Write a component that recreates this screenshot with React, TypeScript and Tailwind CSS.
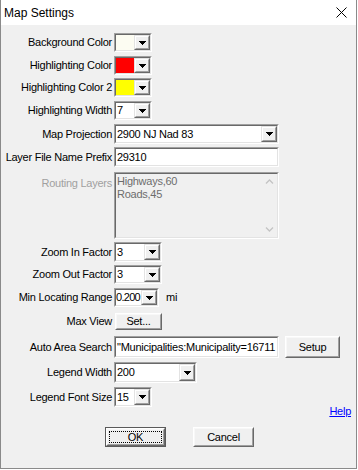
import React from "react";

const FONT = "font-['Liberation_Sans',Arial,sans-serif] text-[11px] tracking-[-0.25px]";

function Arrow() {
  return (
    <svg width="7" height="4" viewBox="0 0 7 4" shapeRendering="crispEdges">
      <path d="M0 0h7v1H0z M1 1h5v1H1z M2 2h3v1H2z M3 3h1v1H3z" fill="#000" />
    </svg>
  );
}

function Chevron({ up }: { up?: boolean }) {
  return (
    <svg width="9" height="5" viewBox="0 0 9 5">
      <path d={up ? "M1 4.5L4.5 1L8 4.5" : "M1 0.5L4.5 4L8 0.5"} fill="none" stroke="#c4c4c4" strokeWidth="1.3" />
    </svg>
  );
}

function Sunken({ className, inner, children }: { className: string; inner?: string; children?: React.ReactNode }) {
  return (
    <div className={"flex border border-t-[#a0a0a0] border-l-[#a0a0a0] border-b-white border-r-white " + className}>
      <div className={"flex flex-1 min-w-0 border border-t-[#696969] border-l-[#696969] border-b-[#e3e3e3] border-r-[#e3e3e3] " + (inner ?? "bg-white")}>
        {children}
      </div>
    </div>
  );
}

function DropBtn() {
  return (
    <div className="flex w-[16px] shrink-0 border border-t-[#e3e3e3] border-l-[#e3e3e3] border-b-[#696969] border-r-[#696969] bg-[#f0f0f0]">
      <div className="flex flex-1 items-center justify-center border border-t-white border-l-white border-b-[#a0a0a0] border-r-[#a0a0a0]">
        <Arrow />
      </div>
    </div>
  );
}

function Combo({
  className,
  value,
  swatch,
  valueClass,
}: {
  className: string;
  value?: string;
  swatch?: string;
  valueClass?: string;
}) {
  return (
    <Sunken className={className}>
      {swatch ? (
        <div className={"flex-1 " + swatch} />
      ) : (
        <div className={"flex flex-1 min-w-0 items-center overflow-hidden whitespace-nowrap text-black " + (valueClass ?? "pl-[1px]")}>
          {value}
        </div>
      )}
      <DropBtn />
    </Sunken>
  );
}

function Btn({ className, children }: { className: string; children: React.ReactNode }) {
  return (
    <div className={"flex border border-t-white border-l-white border-b-[#696969] border-r-[#696969] bg-[#f0f0f0] " + className}>
      <div className="flex flex-1 items-center justify-center border border-t-[#f8f8f8] border-l-[#f8f8f8] border-b-[#a0a0a0] border-r-[#a0a0a0] text-black">
        {children}
      </div>
    </div>
  );
}

function Row({
  label,
  className,
  labelClass,
  alignTop,
  children,
}: {
  label: string;
  className: string;
  labelClass?: string;
  alignTop?: boolean;
  children: React.ReactNode;
}) {
  return (
    <div className={"flex " + (alignTop ? "items-start " : "items-center ") + className}>
      <div className={"w-[111px] shrink-0 text-right whitespace-nowrap " + (labelClass ?? "text-black")}>{label}</div>
      <div className="ml-[2px] flex items-center">{children}</div>
    </div>
  );
}

export default function App() {
  return (
    <div className={"w-[358px] h-[470px] bg-white " + FONT}>
      <div className="flex flex-col w-[357px] h-[469px] border border-t-0 border-[#8a8a8a] bg-[#f0f0f0]">
        <div className="flex h-[25px] shrink-0 items-center justify-between bg-white pl-[3px] pr-[9px]">
          <span className="font-['Liberation_Sans',Arial,sans-serif] text-[12px] tracking-normal text-black">Map Settings</span>
          <svg width="11" height="11" viewBox="0 0 11 11">
            <path d="M0.5 0.5L10.5 10.5M10.5 0.5L0.5 10.5" stroke="#000" strokeWidth="1" />
          </svg>
        </div>

        <Row label="Background Color" className="mt-[8px] h-[19px]">
          <Combo className="w-[38px] h-[19px]" swatch="bg-[#fcfcf2]" />
        </Row>
        <Row label="Highlighting Color" className="mt-[4px] h-[19px]">
          <Combo className="w-[38px] h-[19px]" swatch="bg-[#ff0000]" />
        </Row>
        <Row label="Highlighting Color 2" className="mt-[3px] h-[19px]">
          <Combo className="w-[38px] h-[19px]" swatch="bg-[#ffff00]" />
        </Row>
        <Row label="Highlighting Width" className="mt-[4px] h-[19px]">
          <Combo className="w-[38px] h-[19px]" value="7" />
        </Row>
        <Row label="Map Projection" className="mt-[4px] h-[20px]">
          <Combo className="w-[165px] h-[20px]" value="2900 NJ Nad 83" />
        </Row>
        <Row label="Layer File Name Prefix" className="mt-[3px] h-[20px]">
          <Sunken className="w-[165px] h-[20px]">
            <div className="flex flex-1 items-center pl-[1px] text-black">29310</div>
          </Sunken>
        </Row>
        <Row label="Routing Layers" className="mt-[5px] h-[67px]" labelClass="text-[#a0a0a0] pt-[3px]" alignTop>
          <Sunken className="w-[165px] h-[67px]" inner="bg-[#f0f0f0]">
            <div className="flex-1 pl-[1px] pt-[1px] leading-[13px] text-[#6d6d6d]">
              <div>Highways,60</div>
              <div>Roads,45</div>
            </div>
            <div className="flex w-[15px] shrink-0 flex-col items-center justify-between py-[5px]">
              <Chevron up />
              <Chevron />
            </div>
          </Sunken>
        </Row>
        <Row label="Zoom In Factor" className="mt-[3px] h-[20px]">
          <Combo className="w-[48px] h-[20px]" value="3" />
        </Row>
        <Row label="Zoom Out Factor" className="mt-[3px] h-[19px]">
          <Combo className="w-[48px] h-[19px]" value="3" />
        </Row>
        <Row label="Min Locating Range" className="mt-[4px] h-[19px]">
          <Combo className="w-[45px] h-[19px]" value="0.200" valueClass="pl-0 tracking-[-0.7px]" />
          <span className="ml-[7px] text-black">mi</span>
        </Row>
        <Row label="Max View" className="mt-[6px] h-[17px]">
          <Btn className="ml-[1px] w-[47px] h-[17px]">Set...</Btn>
        </Row>
        <Row label="Auto Area Search" className="mt-[6px] h-[22px]">
          <Sunken className="w-[165px] h-[22px]">
            <div className="flex flex-1 items-center pl-[1px] overflow-hidden whitespace-nowrap text-black">
              "Municipalities:Municipality=16711
            </div>
          </Sunken>
          <Btn className="ml-[6px] w-[55px] h-[22px]">Setup</Btn>
        </Row>
        <Row label="Legend Width" className="mt-[4px] h-[21px]">
          <Combo className="w-[83px] h-[21px]" value="200" />
        </Row>
        <Row label="Legend Font Size" className="mt-[4px] h-[20px]">
          <Combo className="w-[38px] h-[20px]" value="15" />
        </Row>

        <div className="mt-[-2px] flex h-[13px] items-center justify-end pr-[5px]">
          <span className="text-[#0000ff] underline">Help</span>
        </div>

        <div className="mt-[9px] flex h-[20px] pl-[104px]">
          <div className="flex w-[61px] h-[20px] border border-[#5a5a5a]">
            <div className="flex flex-1 border border-t-white border-l-white border-b-[#696969] border-r-[#696969] bg-[#f0f0f0]">
              <div className="flex flex-1 p-[1px] border border-t-[#f8f8f8] border-l-[#f8f8f8] border-b-[#a0a0a0] border-r-[#a0a0a0]">
                <div className="flex flex-1 items-center justify-center border border-dotted border-black text-black">OK</div>
              </div>
            </div>
          </div>
          <Btn className="ml-[27px] w-[61px] h-[20px]">Cancel</Btn>
        </div>
      </div>
    </div>
  );
}
